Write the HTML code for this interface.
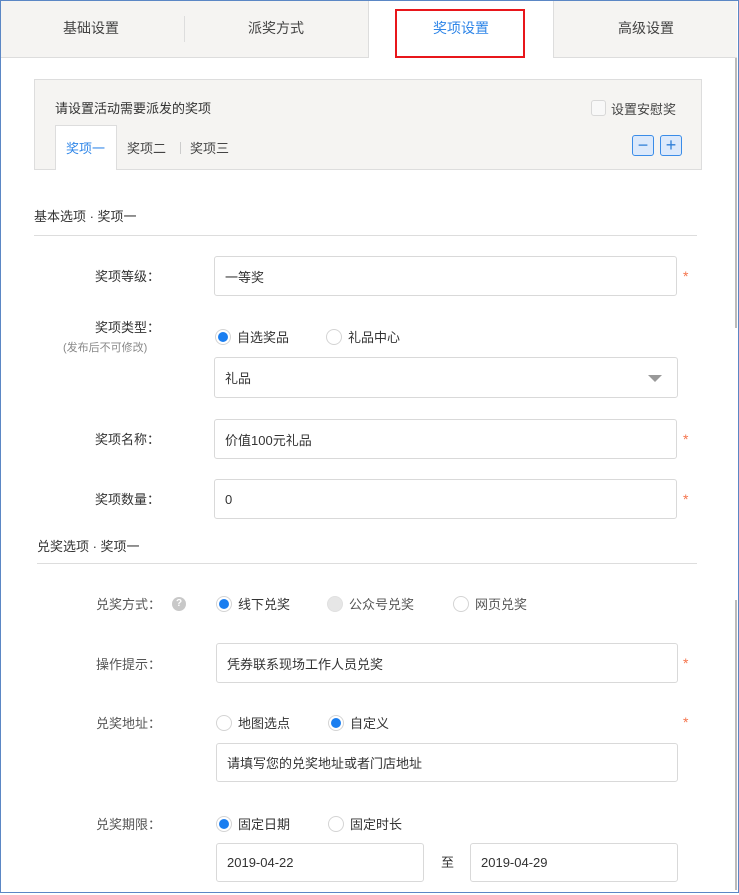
<!DOCTYPE html>
<html><head><meta charset="utf-8"><style>
*{box-sizing:border-box;margin:0;padding:0}
body{width:739px;height:895px;background:#fff;font-family:"Liberation Sans","Noto Sans CJK SC",sans-serif;font-size:13px;color:#333;position:relative;overflow:hidden}
.a{position:absolute;white-space:nowrap}
.frame{position:absolute;left:0;top:0;width:739px;height:893px;border:1px solid #5b87c5}
.inp{position:absolute;border:1px solid #d9d9d9;border-radius:3px;background:#fff;padding-left:10px;display:flex;align-items:center;color:#333}
.lbl{position:absolute;width:160px;text-align:right;color:#333}
.lbl2{position:absolute;color:#555}
.star{position:absolute;color:#f5744c;font-size:14px}
.rad{position:absolute;width:16px;height:16px;border:1px solid #d4d4d4;border-radius:50%;background:#fff}
.rad.on::after{content:"";position:absolute;left:2px;top:2px;width:10px;height:10px;border-radius:50%;background:#1a7ef0}
.rad.dis{background:#e6e6e6;border-color:#e0e0e0}
</style></head><body>
<div class="frame"></div>
<!-- tabs -->
<div class="a" style="left:1px;top:1px;width:367px;height:57px;background:#f5f4f2;border-bottom:1px solid #ddd"></div>
<div class="a" style="left:184px;top:16px;width:1px;height:26px;background:#ddd"></div>
<div class="a" style="left:368px;top:1px;width:1px;height:57px;background:#ddd"></div>
<div class="a" style="left:553px;top:1px;width:184px;height:57px;background:#f5f4f2;border-left:1px solid #ddd;border-bottom:1px solid #ddd"></div>
<div class="a" style="left:63px;top:18px;font-size:14px;color:#444">基础设置</div>
<div class="a" style="left:248px;top:18px;font-size:14px;color:#444">派奖方式</div>
<div class="a" style="left:395px;top:9px;width:130px;height:49px;border:2px solid #e8161b"></div>
<div class="a" style="left:433px;top:18px;font-size:14px;color:#2f86e8">奖项设置</div>
<div class="a" style="left:618px;top:18px;font-size:14px;color:#444">高级设置</div>
<!-- scrollbar -->
<div class="a" style="left:735px;top:58px;width:2px;height:270px;background:#bbb"></div>
<div class="a" style="left:735px;top:600px;width:2px;height:290px;background:#bbb"></div>
<!-- panel -->
<div class="a" style="left:34px;top:79px;width:668px;height:91px;background:#f5f4f2;border:1px solid #ddd"></div>
<div class="a" style="left:55px;top:98px;color:#333">请设置活动需要派发的奖项</div>
<div class="a" style="left:591px;top:100px;width:15px;height:16px;border:1px solid #d8d8d8;border-radius:3px;background:#f8f8f8"></div>
<div class="a" style="left:611px;top:99px;color:#444">设置安慰奖</div>
<div class="a" style="left:55px;top:125px;width:62px;height:45px;background:#fff;border:1px solid #ddd;border-bottom:none"></div>
<div class="a" style="left:66px;top:138px;color:#2f86e8">奖项一</div>
<div class="a" style="left:127px;top:138px;color:#444">奖项二</div>
<div class="a" style="left:180px;top:142px;width:1px;height:12px;background:#ccc"></div>
<div class="a" style="left:190px;top:138px;color:#444">奖项三</div>
<div class="a" style="left:632px;top:135px;width:22px;height:21px;background:#dce9fb;border:1px solid #3a8ce8;border-radius:3px;color:#2f7fd8;text-align:center;line-height:18px;font-size:18px">−</div>
<div class="a" style="left:660px;top:135px;width:22px;height:21px;background:#dce9fb;border:1px solid #3a8ce8;border-radius:3px;color:#2f7fd8;text-align:center;line-height:18px;font-size:18px">+</div>
<!-- section 1 -->
<div class="a" style="left:34px;top:206px">基本选项 · 奖项一</div>
<div class="a" style="left:34px;top:235px;width:663px;height:1px;background:#ddd"></div>
<div class="lbl" style="left:0;top:266px">奖项等级：</div>
<div class="inp" style="left:214px;top:256px;width:463px;height:40px">一等奖</div>
<div class="star" style="left:683px;top:268px">*</div>
<div class="lbl" style="left:0;top:317px">奖项类型：</div>
<div class="a" style="left:63px;top:339px;font-size:11px;color:#888">(发布后不可修改)</div>
<div class="rad on" style="left:215px;top:329px"></div><div class="a" style="left:237px;top:327px">自选奖品</div>
<div class="rad" style="left:326px;top:329px"></div><div class="a" style="left:348px;top:327px">礼品中心</div>
<div class="inp" style="left:214px;top:357px;width:464px;height:41px">礼品</div>
<div class="a" style="left:648px;top:375px;width:0;height:0;border-left:7px solid transparent;border-right:7px solid transparent;border-top:7px solid #999"></div>
<div class="lbl" style="left:0;top:429px">奖项名称：</div>
<div class="inp" style="left:214px;top:419px;width:463px;height:40px">价值100元礼品</div>
<div class="star" style="left:683px;top:431px">*</div>
<div class="lbl" style="left:0;top:489px">奖项数量：</div>
<div class="inp" style="left:214px;top:479px;width:463px;height:40px">0</div>
<div class="star" style="left:683px;top:491px">*</div>
<!-- section 2 -->
<div class="a" style="left:37px;top:536px">兑奖选项 · 奖项一</div>
<div class="a" style="left:37px;top:563px;width:660px;height:1px;background:#ddd"></div>
<div class="lbl2" style="left:96px;top:594px">兑奖方式：</div>
<div class="a" style="left:172px;top:597px;width:14px;height:14px;border-radius:50%;background:#c8c8c8;color:#fff;font-size:10px;text-align:center;line-height:14px;font-weight:bold">?</div>
<div class="rad on" style="left:216px;top:596px"></div><div class="a" style="left:238px;top:594px">线下兑奖</div>
<div class="rad dis" style="left:327px;top:596px"></div><div class="a" style="left:349px;top:594px;color:#555">公众号兑奖</div>
<div class="rad" style="left:453px;top:596px"></div><div class="a" style="left:475px;top:594px;color:#555">网页兑奖</div>
<div class="lbl2" style="left:96px;top:654px">操作提示：</div>
<div class="inp" style="left:216px;top:643px;width:462px;height:40px">凭券联系现场工作人员兑奖</div>
<div class="star" style="left:683px;top:655px">*</div>
<div class="lbl2" style="left:96px;top:713px">兑奖地址：</div>
<div class="rad" style="left:216px;top:715px"></div><div class="a" style="left:238px;top:713px">地图选点</div>
<div class="rad on" style="left:328px;top:715px"></div><div class="a" style="left:350px;top:713px">自定义</div>
<div class="star" style="left:683px;top:714px">*</div>
<div class="inp" style="left:216px;top:743px;width:462px;height:39px">请填写您的兑奖地址或者门店地址</div>
<div class="lbl2" style="left:96px;top:814px">兑奖期限：</div>
<div class="rad on" style="left:216px;top:816px"></div><div class="a" style="left:238px;top:814px">固定日期</div>
<div class="rad" style="left:328px;top:816px"></div><div class="a" style="left:350px;top:814px">固定时长</div>
<div class="inp" style="left:216px;top:843px;width:208px;height:39px">2019-04-22</div>
<div class="a" style="left:441px;top:852px">至</div>
<div class="inp" style="left:470px;top:843px;width:208px;height:39px">2019-04-29</div>
</body></html>
